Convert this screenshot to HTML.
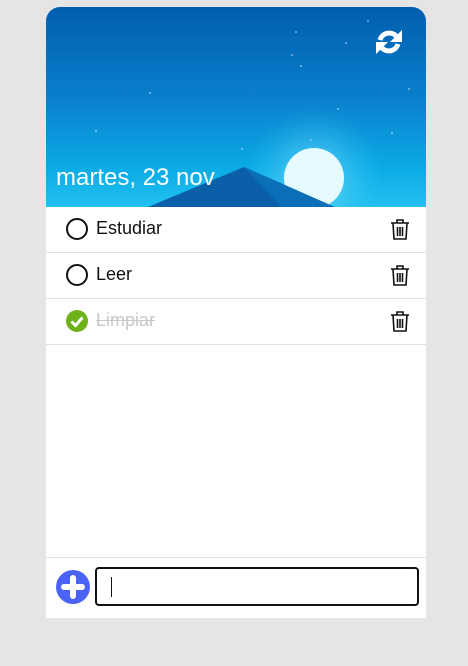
<!DOCTYPE html>
<html><head><meta charset="utf-8"><style>
body{margin:0;width:468px;height:666px;background:#e5e5e5;font-family:"Liberation Sans",sans-serif;position:relative;overflow:hidden}
.card{position:absolute;left:46px;top:7px;width:380px;height:611px;background:#fff;border-radius:14px 14px 0 0;overflow:hidden}
.hdr{position:absolute;left:0;top:0;width:380px;height:200px;overflow:hidden;background:linear-gradient(180deg,#015eae 0%,#0a7fcc 45%,#0aaae6 80%,#22c0ef 100%)}
.date{position:absolute;left:10px;top:157px;color:#fff;font-size:24px;letter-spacing:0}
.row{position:absolute;left:0;width:380px;height:45px;border-bottom:1.5px solid #e2e2e2}
.row .t{position:absolute;left:50px;top:11px;font-size:18px;color:#111}
.circ{position:absolute;left:20px;top:11px;width:18px;height:18px;border:2px solid #111;border-radius:50%}
.trash{position:absolute;left:344px;top:11px}
</style></head><body>
<div class="card">
<div class="hdr">
<svg width="380" height="200" style="position:absolute;left:0;top:0">
<g fill="#cfe9ff" opacity=".6"><circle cx="250" cy="25" r="1"/><circle cx="300" cy="36" r="1"/><circle cx="255" cy="59" r="1"/><circle cx="104" cy="86" r="1"/><circle cx="246" cy="48" r="1"/><circle cx="363" cy="82" r="1"/><circle cx="292" cy="102" r="1"/><circle cx="265" cy="133" r="1"/><circle cx="50" cy="124" r="1"/><circle cx="346" cy="126" r="1"/><circle cx="196" cy="142" r="1"/><circle cx="322" cy="14" r="1"/></g>
<radialGradient id="g" cx="268" cy="171" r="70" gradientUnits="userSpaceOnUse"><stop offset="0" stop-color="#9fe8ff" stop-opacity=".7"/><stop offset="1" stop-color="#30c8f5" stop-opacity="0"/></radialGradient>
<circle cx="268" cy="171" r="70" fill="url(#g)"/>
<circle cx="268" cy="171" r="30" fill="#e6fbff"/>
<polygon points="90,205 198,160 300,205" fill="#0a5fa8"/>
<polygon points="198,160 300,205 240,205" fill="#0b6fb8"/>
</svg>
<svg style="position:absolute;left:329px;top:21px" width="28" height="28" viewBox="0 0 28 28" fill="none" stroke="#fff" stroke-width="5">
<path d="M5 12 A9.5 9.5 0 0 1 21 8"/><path d="M23 16 A9.5 9.5 0 0 1 7 20"/>
<polygon points="27,2 27,14 15,14" fill="#fff" stroke="none"/><polygon points="1,26 1,14 13,14" fill="#fff" stroke="none"/>
</svg>
<div class="date">martes, 23 nov</div>
</div>
<div class="row" style="top:200px"><div class="circ"></div><div class="t">Estudiar</div>
<svg class="trash" width="20" height="22" viewBox="0 0 20 22" fill="none" stroke="#111" stroke-width="1.6"><path d="M1 5h18M7 5V2h6v3M3 5l1 16h12l1-16M7.5 9v9M10 9v9M12.5 9v9"/></svg></div>
<div class="row" style="top:246px"><div class="circ"></div><div class="t">Leer</div>
<svg class="trash" width="20" height="22" viewBox="0 0 20 22" fill="none" stroke="#111" stroke-width="1.6"><path d="M1 5h18M7 5V2h6v3M3 5l1 16h12l1-16M7.5 9v9M10 9v9M12.5 9v9"/></svg></div>
<div class="row" style="top:292px">
<svg style="position:absolute;left:20px;top:11px" width="22" height="22" viewBox="0 0 22 22"><circle cx="11" cy="11" r="11" fill="#6db21a"/><path d="M5.5 11.5l4 4 7-8" stroke="#fff" stroke-width="3" fill="none"/></svg>
<div class="t" style="color:#c8c8c8;text-decoration:line-through">Limpiar</div>
<svg class="trash" width="20" height="22" viewBox="0 0 20 22" fill="none" stroke="#111" stroke-width="1.6"><path d="M1 5h18M7 5V2h6v3M3 5l1 16h12l1-16M7.5 9v9M10 9v9M12.5 9v9"/></svg></div>
<div style="position:absolute;left:0;top:550px;width:380px;border-top:1.5px solid #e2e2e2"></div>
<svg style="position:absolute;left:10px;top:563px" width="34" height="34" viewBox="0 0 34 34"><circle cx="17" cy="17" r="17" fill="#4a63f5"/><path d="M17 8v18M8 17h18" stroke="#fff" stroke-width="6" stroke-linecap="round"/></svg>
<div style="position:absolute;left:49px;top:560px;width:320px;height:35px;border:2px solid #111;border-radius:4px"><div style="position:absolute;left:14px;top:8px;width:1px;height:20px;background:#111"></div></div>
</div>
</body></html>
